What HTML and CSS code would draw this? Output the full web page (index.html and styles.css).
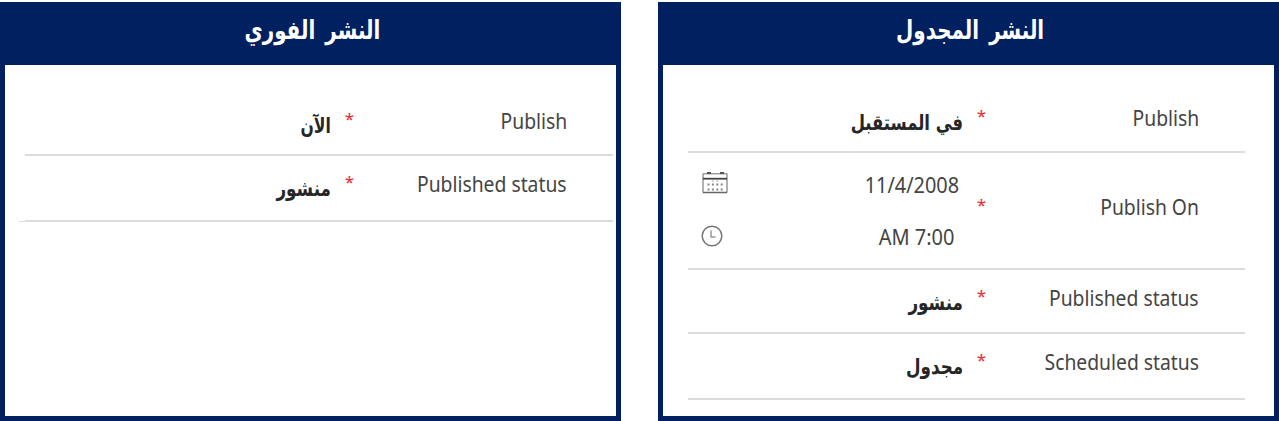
FILE: index.html
```html
<!DOCTYPE html>
<html lang="ar" dir="rtl">
<head>
<meta charset="utf-8">
<title>النشر</title>
<link rel="stylesheet" href="styles.css">
</head>
<body>
<main class="board">
  <section class="panel scheduled">
    <h2 class="title"><span class="title-text">النشر المجدول</span></h2>
    <div class="rows">
      <div class="row first">
        <span class="label">Publish</span><span class="star">*</span><span class="value future">في المستقبل</span>
      </div>
      <div class="row moment">
        <span class="label">Publish On</span><span class="star">*</span>
        <div class="when">
          <div class="line"><span class="date" dir="ltr">11/4/2008</span>
            <svg class="calendar" viewBox="0 0 26 22"><path d="M1 1.500v19M25 1.500v19" stroke="#888" stroke-width="1.300"/><path d="M1 20.500h24" stroke="#666" stroke-width="1.500"/><path d="M1 1.800h24" stroke="#888" stroke-width="1.200"/><path d="M1 6.700h24" stroke="#444" stroke-width="1.800"/><path d="M5 1h4M18 1h4" stroke="#555" stroke-width="1.800"/><path d="M5.500 12.500h16M5.500 17.500h16" stroke="#888" stroke-width="2" stroke-dasharray="2 2.400"/><path d="M9.900 9h7" stroke="#aaa" stroke-width="1" stroke-dasharray="2 2.400"/></svg></div>
          <div class="line"><span class="time" dir="ltr">AM 7:00</span>
            <svg class="clock" viewBox="0 0 22 22"><circle cx="11" cy="11" r="9.800" fill="none" stroke="#777" stroke-width="1.500"/><path d="M10 5.500v6.500h4.500" fill="none" stroke="#999" stroke-width="1.500"/></svg></div>
        </div>
      </div>
      <div class="row third">
        <span class="label">Published status</span><span class="star">*</span><span class="value">منشور</span>
      </div>
      <div class="row fourth">
        <span class="label">Scheduled status</span><span class="star">*</span><span class="value">مجدول</span>
      </div>
    </div>
  </section>
  <section class="panel immediate">
    <h2 class="title"><span class="title-text">النشر الفوري</span></h2>
    <div class="rows">
      <div class="row first">
        <span class="label">Publish</span><span class="star">*</span><span class="value now">الآن</span>
      </div>
      <div class="row second">
        <span class="label">Published status</span><span class="star">*</span><span class="value">منشور</span>
      </div>
    </div>
  </section>
</main>
</body>
</html>
```
FILE: styles.css
```css
body { margin: 0; background: #fff; font-family: "Noto Sans", "DejaVu Sans", sans-serif; }
.board { display: flex; justify-content: space-between; box-sizing: border-box; height: 421px; padding-top: 2px; }
.panel { box-sizing: border-box; width: 621px; border: 5px solid #002060; border-top: 0; }
.title { display: flex; justify-content: center; box-sizing: border-box; margin: 0 -5px; padding-left: 4px; height: 63px; background: #002060; color: #fff; font: bold 25px/58px "DejaVu Sans", sans-serif; }
.title-text { white-space: nowrap; word-spacing: 4px; transform: scale(.795, 1.05); }
.immediate .rows { padding: 0 3px 0 20px; }
.scheduled .rows { padding: 0 29px 0 25px; }
.row { display: grid; grid-template-columns: 213px 23px 1fr; box-sizing: border-box; padding-right: 46px; border-bottom: 2px solid #dcdcdc; align-items: start; }
.immediate .row { height: 66px; padding-top: 13px; }
.immediate .first { height: 91px; padding-top: 41px; }
/* the last divider starts with a thin lead-in on its left */
.immediate .second { position: relative; }
.immediate .second::after { content: ""; position: absolute; left: -6px; bottom: -2px; width: 6px; height: 1px; background: #dcdcdc; }
.scheduled .row { height: 64px; padding-top: 13px; }
.scheduled .first { height: 88px; padding-top: 38px; }
.scheduled .moment { height: 117px; padding-top: 39px; }
.scheduled .fourth { height: 66px; }
.label, .date, .time { justify-self: start; font-size: 21.5px; line-height: 30px; color: #444; white-space: nowrap; transform: scaleX(.898); transform-origin: right; }
.star { font-size: 17px; line-height: 25px; color: #f0282d; }
.value { justify-self: start; font: bold 20px/39px "DejaVu Sans", sans-serif; color: #262626; white-space: nowrap; transform: scale(.84, 1.08); transform-origin: right; }
.future { line-height: 38px; transform: scale(.82, 1.08); }
.now { line-height: 38px; transform: scale(.78, 1.08); }
.when { display: grid; row-gap: 22px; margin-top: -22px; }
.line { display: flex; justify-content: space-between; align-items: center; height: 30px; }
.date { margin-right: 4px; transform: scaleX(.925); }
.time { margin-right: 9px; transform: scaleX(.93); }
.calendar { width: 26px; height: 22px; margin: -4px 0 0 14px; }
.clock { width: 22px; height: 22px; margin: -2px 0 0 13px; }
```
